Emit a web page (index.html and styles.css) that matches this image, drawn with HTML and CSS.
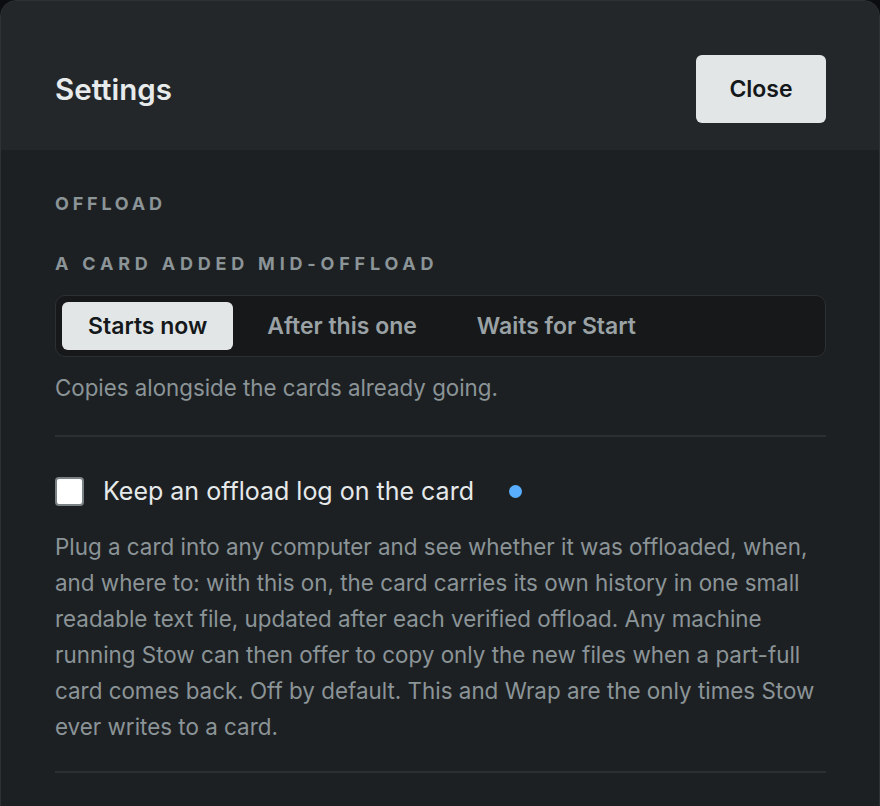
FILE: index.html
```html
<!DOCTYPE html>
<html>
<head>
<meta charset="utf-8">
<link rel="stylesheet" href="styles.css">
</head>
<body>
<div class="panel">
  <header class="head">
    <h1 class="title">Settings</h1>
    <button class="close">Close</button>
  </header>
  <main class="body">
    <div class="section-label">OFFLOAD</div>
    <div class="field-label">A CARD ADDED MID-OFFLOAD</div>
    <div class="segmented">
      <button class="seg active">Starts now</button>
      <button class="seg">After this one</button>
      <button class="seg">Waits for Start</button>
    </div>
    <p class="hint">Copies alongside the cards already going.</p>
    <hr class="divider">
    <label class="check-row">
      <span class="box"></span>
      <span class="check-text">Keep an offload log on the card</span>
      <span class="dot"></span>
    </label>
    <p class="desc">Plug a card into any computer and see whether it was offloaded, when, and where to: with this on, the card carries its own history in one small readable text file, updated after each verified offload. Any machine running Stow can then offer to copy only the new files when a part-full card comes back. Off by default. This and Wrap are the only times Stow ever writes to a card.</p>
    <hr class="divider">
  </main>
</div>
</body>
</html>
```
FILE: styles.css
```css
html, body {
  margin: 0;
  padding: 0;
  background: #0c0d0e;
  height: 100%;
  overflow: hidden;
}
body {
  font-family: "Inter", "Open Sans", sans-serif;
}
.panel {
  width: 880px;
  box-sizing: border-box;
  min-height: 900px;
  border: 1px solid #2e3235;
  border-radius: 16px 16px 0 0;
  background: #1d2023;
  overflow: hidden;
}
.head {
  display: flex;
  align-items: center;
  justify-content: space-between;
  background: #23272a;
  height: 149px;
  box-sizing: border-box;
  padding: 53px 53px 27px 54px;
}
.title {
  margin: 0;
  font-size: 29.5px;
  font-weight: 600;
  color: #e8ebec;
}
.close {
  width: 130px;
  height: 68px;
  border: none;
  border-radius: 6px;
  background: #e2e6e7;
  color: #15181a;
  font-family: inherit;
  font-size: 23px;
  font-weight: 600;
  cursor: pointer;
}
.body {
  padding: 40px 53px 0 54px;
}
.section-label, .field-label {
  font-size: 18px;
  font-weight: 700;
  letter-spacing: 3.8px;
  color: #8b9497;
  line-height: 28px;
}
.field-label {
  margin-top: 32px;
  letter-spacing: 4.8px;
}
.segmented {
  display: flex;
  gap: 8px;
  margin-top: 17px;
  padding: 6px;
  border: 1px solid #2c3033;
  border-radius: 10px;
  background: #16181a;
}
.seg {
  height: 48px;
  padding: 0 26px;
  border: none;
  border-radius: 6px;
  background: transparent;
  color: #9aa2a5;
  font-family: inherit;
  font-size: 23px;
  font-weight: 600;
}
.seg.active {
  background: #e2e6e7;
  color: #15181a;
}
.hint {
  margin: 14px 0 0;
  font-size: 22.3px;
  line-height: 34px;
  color: #8b9497;
}
.divider {
  border: none;
  height: 2px;
  background: #2c3033;
  margin: 30px 0 0;
}
.check-row {
  display: flex;
  align-items: center;
  margin-top: 38px;
  height: 32px;
}
.box {
  width: 25px;
  height: 25px;
  border: 2px solid #7a8285;
  border-radius: 4px;
  background: #ffffff;
}
.check-text {
  margin-left: 19px;
  font-size: 25px;
  color: #e6e9ea;
}
.dot {
  width: 13px;
  height: 13px;
  border-radius: 50%;
  background: #5aaeff;
  margin-left: 35px;
}
.desc {
  margin: 22px 0 0;
  font-size: 22.4px;
  line-height: 36px;
  color: #8b9497;
}
.desc + .divider {
  margin-top: 26px;
}
```
